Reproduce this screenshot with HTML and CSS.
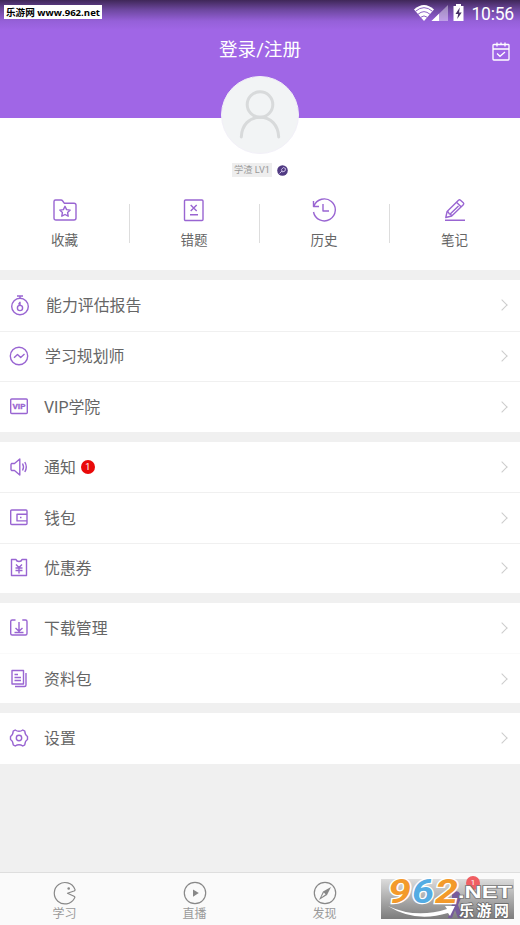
FILE: index.html
```html
<!DOCTYPE html>
<html lang="zh-CN">
<head>
<meta charset="utf-8">
<title>我的</title>
<link rel="stylesheet" href="styles.css">
</head>
<body>
<div class="app">
  <header class="header">
    <div class="status">
      <svg class="status-icons" width="54" height="18" viewBox="0 0 54 18">
        <path d="M0 5.5Q10 -3.5 20 5.5L10 17Z" fill="#fff"/>
        <path d="M1.5 7.3Q10 0 18.500 7.3M4 10.300Q10 5 16 10.300M6.700 13.300Q10 10.500 13.300 13.300" fill="none" stroke="#8d62c4" stroke-width="1"/>
        <path d="M17.500 17L34 1V17Z" fill="#fff" opacity=".4"/>
        <path d="M17.500 17L25 9.700V17Z" fill="#fff"/>
        <path d="M39.500 2H42V0h5v2h2.500v15h-10Z" fill="#fff"/>
        <path d="M45.800 3.500L41.500 10h2.700l-1 5 4.500-6.600H45Z" fill="#463064"/>
      </svg>
      <span class="clock">10:56</span>
    </div>
    <div class="title-bar">
      <h1 class="title">登录/注册</h1>
      <svg class="calendar" width="18" height="19" viewBox="0 0 18 19" fill="none" stroke="#fff" stroke-width="1.300">
        <rect x="1" y="2.500" width="16" height="15.500" rx=".8"/><path d="M1 7h16M5 .5v4M9 .5v2M13 .5v4M5 11.500l3 2.800 5-4.300"/>
      </svg>
    </div>
    <span class="site-tag">乐游网 www.962.net</span>
  </header>

  <section class="profile">
    <div class="avatar">
      <svg width="78" height="78" viewBox="0 0 78 78" fill="none" stroke="#d8dadb" stroke-width="3" stroke-linecap="round">
        <circle cx="39" cy="28.500" r="12.800"/><path d="M20.300 61c.5-12 8-19.700 18.700-19.700S57.200 49 57.700 61"/>
      </svg>
    </div>
    <div class="level">
      <span class="level-tag">学渣 LV1</span>
      <svg width="11" height="11" viewBox="0 0 11 11"><circle cx="5.500" cy="5.500" r="5.300" fill="#503a82"/><path d="M2.500 8.500L5 6M4.500 4.500l1.800-2 2.200 1-.5 2.500-2.500 1Z" fill="none" stroke="#c9bce5"/></svg>
    </div>
    <nav class="shortcuts">
      <a class="shortcut"><svg class="icon" viewBox="0 0 24 24"><path d="M1 20V3.500Q1 2 2.500 2H8q1 0 1.700 1l1.500 2.200H21q2 0 2 1.800v13q0 2-2 2H3q-2 0-2-2Z"/><path d="M12 8.300l1.600 3.300 3.600.5-2.600 2.500.6 3.600-3.200-1.700-3.200 1.700.6-3.600-2.600-2.500 3.600-.5Z"/></svg><span>收藏</span></a>
      <a class="shortcut"><svg class="icon" viewBox="0 0 24 24"><rect x="2.500" y="2" width="18.500" height="20.500" rx="1"/><path d="M8.700 7l6 6M14.700 7l-6 6M8 16.800h8"/></svg><span>错题</span></a>
      <a class="shortcut"><svg class="icon" viewBox="0 0 24 24"><path d="M2 8A11 11 0 1 1 1.500 14M1.500 3v5.500H7M11 6v7h6"/></svg><span>历史</span></a>
      <a class="shortcut"><svg class="icon" viewBox="0 0 24 24"><path d="M2.800 19.500l1.300-6L15.500 2.200q1-.9 2 0l2.800 2.600q1 1 0 2L8.700 18ZM4.100 13.500q1.600 0 2 2.200 2.200.3 2.600 2.300M13.500 4.300l4.800 4.700M15.500 8l-8 7.800M2 22.300h20"/></svg><span>笔记</span></a>
    </nav>
  </section>

  <section class="group">
    <a class="row row-report"><svg class="icon" viewBox="0 0 24 24"><circle cx="12" cy="13.500" r="8.300"/><path d="M9 3h6M12 3v2.500M12 8.800v3.700M10.500 11.500L12 9"/><circle cx="12" cy="15" r="2.600"/></svg><span>能力评估报告</span><i class="arrow"></i></a>
    <a class="row row-plan"><svg class="icon" viewBox="0 0 24 24"><circle cx="12" cy="12" r="8.700"/><path d="M7 13.800l3.500-3.400 3.200 3 3.800-3.400"/></svg><span>学习规划师</span><i class="arrow"></i></a>
    <a class="row"><svg class="icon" viewBox="0 0 24 24"><rect x="3.700" y="4" width="16.600" height="14.500" rx="1"/><text class="vip" x="5.500" y="14" textLength="13" lengthAdjust="spacingAndGlyphs">VIP</text></svg><span>VIP学院</span><i class="arrow"></i></a>
  </section>

  <section class="group">
    <a class="row"><svg class="icon" viewBox="0 0 24 24"><path d="M4.500 8.500h3L12.800 4v16l-5.300-4.500h-3l-.5-1v-5ZM15.500 8.500q2 3.500 0 7M17.800 7q3 5 0 10"/></svg><span>通知</span><b class="badge">1</b><i class="arrow"></i></a>
    <a class="row"><svg class="icon" viewBox="0 0 24 24"><rect x="3.700" y="4" width="16.300" height="14.500" rx="1"/><path d="M20 8.200H10v6.700h10M13 11.500h1.500"/></svg><span>钱包</span><i class="arrow"></i></a>
    <a class="row"><svg class="icon" viewBox="0 0 24 24"><path d="M4.500 3.500H9q.5 2 3 2t3-2h4.500v16H4.500ZM9 8.500l3 3 3-3M12 11.500v6M8.500 12h7M8.500 14.500h7"/></svg><span>优惠券</span><i class="arrow"></i></a>
  </section>

  <section class="group group-short">
    <a class="row"><svg class="icon" viewBox="0 0 24 24"><path d="M8.500 4H5.200q-1.500 0-1.500 1.500v12q0 1.500 1.500 1.500h13.300q1.500 0 1.500-1.500v-12q0-1.500-1.500-1.500h-3.200M12 6v9M8.500 12l3.500 3.300 3.500-3.300M7.500 16.500h9"/></svg><span>下载管理</span><i class="arrow"></i></a>
    <a class="row row-faint"><svg class="icon" viewBox="0 0 24 24"><path d="M5 3.500h11.500V17H5ZM19 6v12q0 1.500-1.500 1.500H8M7.500 7.500h3.500M7.500 10.500h6.500M7.500 13.500h6.500"/></svg><span>资料包</span><i class="arrow"></i></a>
  </section>

  <section class="group group-short">
    <a class="row"><svg class="icon" viewBox="0 0 24 24"><path d="M8.200 4q1.800 1.300 3.800 1.300T15.800 4l2 1.200q.2 3.800 2.700 5.300v3q-2.500 1.500-2.700 5.300l-2 1.200q-1.800-1.300-3.800-1.300T8.200 20l-2-1.200Q6 15 3.500 13.500v-3Q6 9 6.200 5.200Z"/><circle cx="12" cy="12" r="2.700"/></svg><span>设置</span><i class="arrow"></i></a>
  </section>

  <nav class="tabs">
    <a class="tab"><svg class="tab-icon" viewBox="0 0 24 24"><path d="M21.800 8A10.700 10.700 0 1 0 21.300 17.500Q22.500 16 21 15.300L14.500 12.300 21 10Q22.500 9.400 21.800 8Z" stroke-linejoin="round"/><circle cx="15.700" cy="7.500" r="1.300" fill="#888" stroke="none"/></svg><span>学习</span></a>
    <a class="tab"><svg class="tab-icon" viewBox="0 0 24 24"><circle cx="12" cy="12" r="10.700"/><path d="M10 8.500l5.800 3.600-5.800 3.600Z" fill="#888" stroke="none"/></svg><span>直播</span></a>
    <a class="tab"><svg class="tab-icon" viewBox="0 0 24 24"><circle cx="12" cy="12" r="10.700"/><path d="M18 6l-4 8-8 5L10 10.500Z" fill="#888" stroke="none"/><path d="M10.800 11.500l1.800 1.800-4.200 3Z" fill="#fafafa" stroke="none"/></svg><span>发现</span></a>
    <a class="tab"></a>
    <svg class="site-logo" width="134" height="46" viewBox="0 0 134 46">
      <defs>
        <linearGradient id="plate" x1="0" y1="0" x2="0" y2="1"><stop offset="0" stop-color="#dcdcdc"/><stop offset="1" stop-color="#7c7c7c"/></linearGradient>
      </defs>
      <rect y="4" width="133" height="40" fill="url(#plate)"/>
      <path d="M71 18q8-5 9 5l-3 7 5 13h-5l-3-8-3 8h-4l4-14Z" fill="#765b9c"/>
      <circle cx="92" cy="8" r="7" fill="#f05e62"/>
      <text x="92" y="10" class="logo-count" text-anchor="middle">1</text>
      <path d="M7 31Q35 44 66 34l-2-3 10 0-5 10-2-3Q34 48 7 31Z" fill="#fff"/>
      <g class="logo-digits">
        <text x="7" y="28" textLength="23" lengthAdjust="spacingAndGlyphs" fill="#f39a2b">9</text>
        <text x="31" y="28" textLength="22" lengthAdjust="spacingAndGlyphs" fill="#54ace3">6</text>
        <text x="54" y="28" textLength="23" lengthAdjust="spacingAndGlyphs" fill="#f39a2b">2</text>
      </g>
      <text class="logo-net" x="77" y="23" textLength="54" lengthAdjust="spacingAndGlyphs">.NET</text>
      <text class="logo-name" x="78" y="40.500" textLength="50">乐游网</text>
    </svg>
  </nav>
</div>
</body>
</html>
```
FILE: styles.css
```css
* { box-sizing: border-box; }
body {
  margin: 0;
  font-family: Roboto, "Noto Sans CJK SC", sans-serif;
  color: #666;
  background: #f0f0f0;
}
.app {
  display: flex;
  flex-direction: column;
  width: 520px;
  height: 925px;
  overflow: hidden;
}
.header {
  position: relative;
  height: 118px;
  flex: none;
  background: linear-gradient(#3f2758 0, #6e48a0 10px, #9560d8 21px, #a066e6 30px);
}
.status {
  display: flex;
  justify-content: flex-end;
  align-items: center;
  gap: 3px;
  height: 26px;
  padding-right: 6px;
}
.status-icons { margin-top: -1px; }
.clock { color: #fff; font-size: 17.500px; line-height: 26px; letter-spacing: -.2px; padding-top: 2px; }
.title-bar {
  display: grid;
  grid-template-columns: 1fr auto 1fr;
  align-items: center;
  height: 48px;
  padding-right: 10px;
  padding-left: 10px;
}
.title { grid-column: 2; margin: 0; color: #fff; font-size: 18.600px; font-weight: 400; line-height: 26px; }
.calendar { justify-self: end; margin-top: 2px; }
.site-tag {
  position: absolute;
  left: 4px;
  top: 5px;
  width: 98px;
  height: 14px;
  background: #fff;
  color: #000;
  font: 700 9.600px/15px "Open Sans", "Noto Sans CJK SC", sans-serif;
  white-space: nowrap;
  text-align: center;
}
.profile {
  display: flex;
  flex-direction: column;
  align-items: center;
  flex: none;
  height: 152px;
  background: #fff;
}
.avatar {
  position: relative;
  width: 78px;
  height: 78px;
  margin-top: -42px;
  border: 1px solid #f2f0f8;
  border-radius: 50%;
  background: #f2f4f5;
  overflow: hidden;
}
.avatar svg { display: block; margin: -1px; }
.level {
  display: flex;
  align-items: center;
  gap: 5px;
  height: 14px;
  margin-top: 9px;
}
.level-tag { width: 40px; background: #eee; color: #999; font-size: 9.200px; line-height: 14px; text-align: center; white-space: nowrap; }
.shortcuts { display: grid; grid-template-columns: 129px 130px 130px 131px; width: 100%; margin-top: 21px; }
.shortcut {
  display: flex;
  flex-direction: column;
  align-items: center;
  gap: 8px;
  font-size: 13.500px;
  line-height: 20px;
}
.shortcut + .shortcut { background: linear-gradient(#ddd, #ddd) 0 6px / 1px 39px no-repeat; }
.icon { flex: none; width: 24px; height: 24px; fill: none; stroke: #9965d2; stroke-width: 1.400; stroke-linejoin: round; }
.group { flex: none; margin-top: 10px; background: #fff; }
.row {
  display: flex;
  align-items: center;
  height: 50.500px;
  padding: 0 14px 0 7px;
  font-size: 15.900px;
  line-height: 24px;
}
.group-short .row { height: 50.200px; }
.row + .row { border-top: 1px solid #f0f0f0; }
.row + .row-faint { border-top-color: #fafafa; }
.row .icon + span { margin-left: 13px; margin-top: 2px; }
.row-report { padding-left: 8px; }
.row-report .icon + span { margin-left: 14px; }
.row-plan .icon + span { margin-left: 14px; }
.vip { fill: #9965d2; stroke: #9965d2; stroke-width: .3; font: 700 7.500px Roboto, sans-serif; }
.arrow {
  width: 8px;
  height: 8px;
  margin-left: auto;
  border: solid #ccc;
  border-width: 1px 1px 0 0;
  transform: rotate(45deg);
}
.badge {
  width: 14px;
  height: 14px;
  margin-left: 5px;
  border-radius: 50%;
  background: #e90909;
  color: #fff;
  font-size: 9px;
  font-weight: 400;
  line-height: 14px;
  text-align: center;
}
.tabs {
  position: relative;
  display: flex;
  flex: none;
  height: 53px;
  margin-top: auto;
  border-top: 1px solid #dedede;
  background: #fafafa;
}
.tab {
  display: flex;
  flex: 1;
  flex-direction: column;
  align-items: center;
  padding-top: 8px;
  padding-right: 1px;
  color: #999;
  font-size: 12px;
  line-height: 18px;
}
.tab-icon { width: 24px; height: 24px; fill: none; stroke: #888; stroke-width: 1.200; }
.site-logo { position: absolute; left: 381px; top: 2px; overflow: visible; }
.logo-digits { font: italic 700 33px Roboto, sans-serif; stroke: #fff; stroke-width: 2.500px; paint-order: stroke; }
.logo-count { fill: #fff; font: 8px Roboto, sans-serif; }
.logo-net { fill: #fff; stroke: #777; stroke-width: 1.500px; paint-order: stroke; font: 700 17px "Liberation Sans", sans-serif; }
.logo-name { fill: #fff; stroke: #666; stroke-width: 1.500px; paint-order: stroke; font: 700 15px "Noto Sans CJK SC", sans-serif; }
```
